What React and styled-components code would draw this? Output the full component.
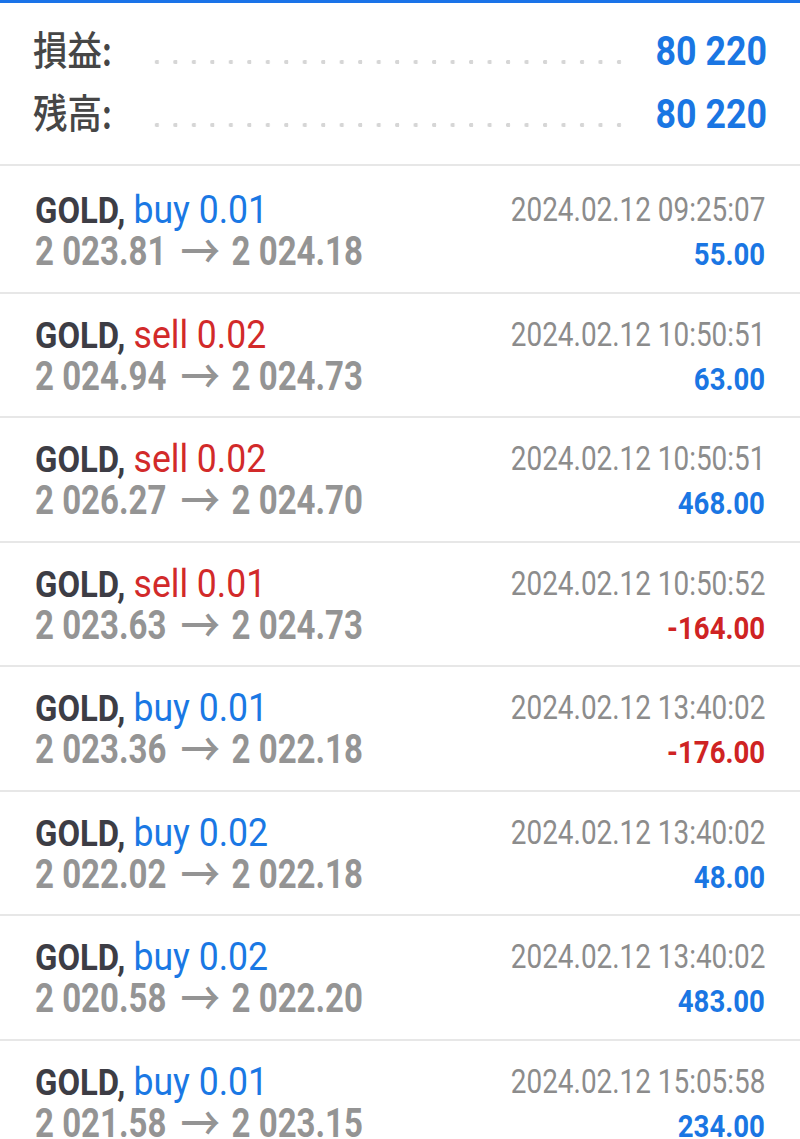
import React from "react";
import styled, { createGlobalStyle } from "styled-components";

const GlobalStyle = createGlobalStyle`
  html, body {
    margin: 0;
    padding: 0;
    background: #ffffff;
  }
  body {
    font-family: Roboto, "Noto Sans", "Liberation Sans", sans-serif;
    -webkit-font-smoothing: antialiased;
  }
`;

const trades = [
  { side: "buy", lot: "0.01", open: "2 023.81", close: "2 024.18", time: "2024.02.12 09:25:07", profit: "55.00" },
  { side: "sell", lot: "0.02", open: "2 024.94", close: "2 024.73", time: "2024.02.12 10:50:51", profit: "63.00" },
  { side: "sell", lot: "0.02", open: "2 026.27", close: "2 024.70", time: "2024.02.12 10:50:51", profit: "468.00" },
  { side: "sell", lot: "0.01", open: "2 023.63", close: "2 024.73", time: "2024.02.12 10:50:52", profit: "-164.00" },
  { side: "buy", lot: "0.01", open: "2 023.36", close: "2 022.18", time: "2024.02.12 13:40:02", profit: "-176.00" },
  { side: "buy", lot: "0.02", open: "2 022.02", close: "2 022.18", time: "2024.02.12 13:40:02", profit: "48.00" },
  { side: "buy", lot: "0.02", open: "2 020.58", close: "2 022.20", time: "2024.02.12 13:40:02", profit: "483.00" },
  { side: "buy", lot: "0.01", open: "2 021.58", close: "2 023.15", time: "2024.02.12 15:05:58", profit: "234.00" },
];

const App = () => {
  return (
    <Page>
      <GlobalStyle />
      <TopBar />
      <Summary>
        <SummaryRow>
          <Label>損益:</Label>
          <Leader />
          <Value>80 220</Value>
        </SummaryRow>
        <SummaryRow>
          <Label>残高:</Label>
          <Leader />
          <Value>80 220</Value>
        </SummaryRow>
      </Summary>
      <List>
        {trades.map((t, i) => (
          <TradeRow key={i}>
            <LeftCol>
              <Title>
                <Symbol>GOLD,</Symbol> <Side $side={t.side}>{t.side} {t.lot}</Side>
              </Title>
              <Prices>
                {t.open}<Arrow>→</Arrow>{t.close}
              </Prices>
            </LeftCol>
            <RightCol>
              <Time>{t.time}</Time>
              <Profit $negative={t.profit.startsWith("-")}>{t.profit}</Profit>
            </RightCol>
          </TradeRow>
        ))}
      </List>
    </Page>
  );
};

export default App;

const Page = styled.div`
  width: 800px;
  overflow: hidden;
  background: #fff;
`;

const TopBar = styled.div`
  height: 3px;
  background: #1a73e8;
`;

const Summary = styled.div`
  padding: 17px 33px 18px;
  border-bottom: 2px solid #e7e7e7;
`;

const SummaryRow = styled.div`
  display: grid;
  grid-template-columns: 115px 1fr 139px;
  height: 63px;
  align-items: center;
`;

const Label = styled.span`
  display: inline-block;
  align-self: start;
  font-family: "Noto Sans CJK JP", "Noto Sans CJK SC", sans-serif;
  font-size: 40px;
  font-weight: 500;
  line-height: 57px;
  color: #464646;
  white-space: nowrap;
  transform: scaleX(0.86);
  transform-origin: left center;
`;

const Leader = styled.div`
  align-self: stretch;
  background-image: radial-gradient(circle, #d6d6d6 2px, transparent 2.4px);
  background-size: 17.8px 6px;
  background-repeat: space no-repeat;
  background-position: 0 39px;
`;

const Value = styled.span`
  display: block;
  text-align: right;
  font-size: 40px;
  font-weight: 700;
  line-height: 63px;
  color: #1a76e3;
  white-space: nowrap;
  transform: scaleX(0.895);
  transform-origin: right center;
`;

const List = styled.div`
  display: flex;
  flex-direction: column;
  padding-top: 3px;
`;

const TradeRow = styled.div`
  box-sizing: border-box;
  height: 124.5px;
  padding: 20px 35px 0 35px;
  display: flex;
  justify-content: space-between;
  border-bottom: 2px solid #e7e7e7;
`;

const LeftCol = styled.div`
  display: flex;
  flex-direction: column;
  white-space: nowrap;
`;

const RightCol = styled.div`
  display: flex;
  flex-direction: column;
  align-items: flex-end;
  white-space: nowrap;
`;

const Title = styled.div`
  font-size: 36.5px;
  line-height: 41px;
  transform: scaleX(0.9);
  transform-origin: left center;
`;

const Symbol = styled.span`
  font-weight: 700;
  color: #3d3d45;
`;

const Side = styled.span`
  font-size: 39.5px;
  font-weight: 400;
  color: ${(p) => (p.$side === "sell" ? "#d22a2a" : "#1a78e4")};
`;

const Prices = styled.div`
  font-size: 40px;
  font-weight: 700;
  line-height: 42px;
  color: #949494;
  transform: scaleX(0.825);
  transform-origin: left center;
`;

const Arrow = styled.span`
  font-family: "Noto Sans CJK JP", "DejaVu Sans", sans-serif;
  font-weight: 500;
  font-size: 48px;
  line-height: 0;
  vertical-align: -4px;
  margin: 0 14px 0 17px;
`;

const Time = styled.div`
  font-size: 34px;
  line-height: 41px;
  color: #8c8c8c;
  transform: scaleX(0.82);
  transform-origin: right center;
`;

const Profit = styled.div`
  font-size: 31px;
  font-weight: 700;
  line-height: 50px;
  color: ${(p) => (p.$negative ? "#cf2323" : "#1a76e3")};
  transform: scaleX(0.89);
  transform-origin: right center;
`;
